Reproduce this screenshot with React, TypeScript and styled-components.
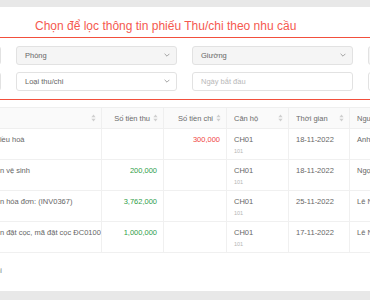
import styled, { createGlobalStyle } from "styled-components";

const GlobalStyle = createGlobalStyle`
  html, body {
    margin: 0;
    padding: 0;
  }
  body {
    width: 370px;
    height: 300px;
    overflow: hidden;
    background: #e8e8e8;
    font-family: "Liberation Sans", Arial, sans-serif;
  }
`;

const Card = styled.div`
  margin: 7px 0 0 -176px;
  width: 689px;
  height: 284px;
  padding: 0 16px;
  background: #fff;
`;

const Title = styled.div`
  margin: 0 -16px;
  padding: 11px 0 3px 211px;
  font-size: 12px;
  line-height: 16px;
  color: #f5594f;
  border-bottom: 1.5px solid #f24f3c;
`;

const Filters = styled.div`
  margin: 0 -16px;
  padding: 7.5px 16px 8px;
  display: grid;
  grid-template-columns: repeat(4, 161px);
  column-gap: 15px;
  row-gap: 7px;
  border-bottom: 1.5px solid #f24f3c;
`;

const Select = styled.div<{ $muted?: boolean }>`
  height: 19px;
  box-sizing: border-box;
  display: flex;
  align-items: center;
  justify-content: space-between;
  padding: 0 6px 0 8px;
  border: 1px solid #e2e2e2;
  border-radius: 3px;
  background: ${(p) => (p.$muted ? "#f5f5f5" : "#fff")};
  font-size: 7.5px;
  color: #666;
`;

const Placeholder = styled.span`
  color: #b8b8b8;
`;

const Chevron = () => (
  <svg width="6" height="4" viewBox="0 0 6 4">
    <path d="M0.6 0.8 L3 3.2 L5.4 0.8" fill="none" stroke="#9a9a9a" strokeWidth="0.9" />
  </svg>
);

const Table = styled.table`
  margin-top: 7.5px;
  width: 689px;
  table-layout: fixed;
  border-collapse: collapse;
  font-size: 7.5px;
  color: #666;
`;

const Th = styled.th`
  height: 20px;
  padding: 0 5px 0 7px;
  background: #fafafa;
  border: 1px solid #efefef;
  font-weight: normal;
  text-align: left;
  color: #6b6b6b;
`;

const HeadInner = styled.div<{ $right?: boolean }>`
  display: flex;
  align-items: center;
  justify-content: ${(p) => (p.$right ? "flex-end" : "space-between")};
  gap: 3px;
  white-space: nowrap;
  overflow: hidden;
`;

const Td = styled.td<{ $right?: boolean }>`
  height: 31px;
  box-sizing: border-box;
  padding: 6px 6px 0 7px;
  vertical-align: top;
  border: 1px solid #f0f0f0;
  text-align: ${(p) => (p.$right ? "right" : "left")};
  line-height: 9px;
  white-space: nowrap;
  overflow: hidden;
`;

const Amount = styled.span<{ $kind: "in" | "out" }>`
  color: ${(p) => (p.$kind === "in" ? "#2f9e48" : "#f0473f")};
`;

const Sub = styled.div`
  margin-top: 3px;
  font-size: 5.5px;
  line-height: 8px;
  color: #b5b5b5;
`;

const Footer = styled.div`
  margin-top: 13px;
  width: 162px;
  text-align: right;
  font-size: 7.5px;
  line-height: 9px;
  color: #888;
`;

const SortIcon = () => (
  <svg width="5" height="8" viewBox="0 0 5 8">
    <path d="M2.5 0.6 L4.6 3.2 L0.4 3.2 Z" fill="#cfcfcf" />
    <path d="M2.5 7.4 L4.6 4.8 L0.4 4.8 Z" fill="#cfcfcf" />
  </svg>
);

type Row = {
  code: string;
  content: string;
  income?: string;
  expense?: string;
  room: string;
  unit: string;
  date: string;
  person: string;
};

const rows: Row[] = [
  { code: "PC0012", content: "Thay điều hoà", expense: "300,000", room: "CH01", unit: "101", date: "18-11-2022", person: "Anh Đức" },
  { code: "PT0045", content: "Thu tiền vệ sinh", income: "200,000", room: "CH01", unit: "101", date: "18-11-2022", person: "Ngọc Anh" },
  { code: "PT0046", content: "Thu tiền hóa đơn: (INV0367)", income: "3,762,000", room: "CH01", unit: "101", date: "25-11-2022", person: "Lê Nam" },
  { code: "PT0047", content: "Thu tiền đặt cọc, mã đặt cọc ĐC0100", income: "1,000,000", room: "CH01", unit: "101", date: "17-11-2022", person: "Lê Nam" },
];

const columns = [
  { title: "Mã phiếu", width: 129 },
  { title: "Mô tả", width: 132 },
  { title: "Số tiền thu", width: 62, right: true },
  { title: "Số tiền chi", width: 63, right: true },
  { title: "Căn hộ", width: 62 },
  { title: "Thời gian", width: 61 },
  { title: "Người nộp/nhận", width: 180 },
];

export default function App() {
  return (
    <>
      <GlobalStyle />
      <Card>
        <Title>Chọn để lọc thông tin phiếu Thu/chi theo nhu cầu</Title>
        <Filters>
          <Select>
            Tòa nhà <Chevron />
          </Select>
          <Select $muted>
            Phòng <Chevron />
          </Select>
          <Select $muted>
            Giường <Chevron />
          </Select>
          <Select $muted>
            Trạng thái <Chevron />
          </Select>
          <Select>
            <Placeholder>Mã phiếu</Placeholder>
          </Select>
          <Select>
            Loại thu/chi <Chevron />
          </Select>
          <Select>
            <Placeholder>Ngày bắt đầu</Placeholder>
          </Select>
          <Select>
            <Placeholder>Ngày kết thúc</Placeholder>
          </Select>
        </Filters>
        <Table>
          <colgroup>
            {columns.map((c) => (
              <col key={c.title} style={{ width: c.width }} />
            ))}
          </colgroup>
          <thead>
            <tr>
              {columns.map((c) => (
                <Th key={c.title}>
                  <HeadInner $right={c.right}>
                    <span>{c.title}</span>
                    <SortIcon />
                  </HeadInner>
                </Th>
              ))}
            </tr>
          </thead>
          <tbody>
            {rows.map((r) => (
              <tr key={r.code}>
                <Td>{r.code}</Td>
                <Td>{r.content}</Td>
                <Td $right>{r.income && <Amount $kind="in">{r.income}</Amount>}</Td>
                <Td $right>{r.expense && <Amount $kind="out">{r.expense}</Amount>}</Td>
                <Td>
                  {r.room}
                  <Sub>{r.unit}</Sub>
                </Td>
                <Td>{r.date}</Td>
                <Td>{r.person}</Td>
              </tr>
            ))}
          </tbody>
        </Table>
        <Footer>Tổng số: 4 bản ghi</Footer>
      </Card>
    </>
  );
}
